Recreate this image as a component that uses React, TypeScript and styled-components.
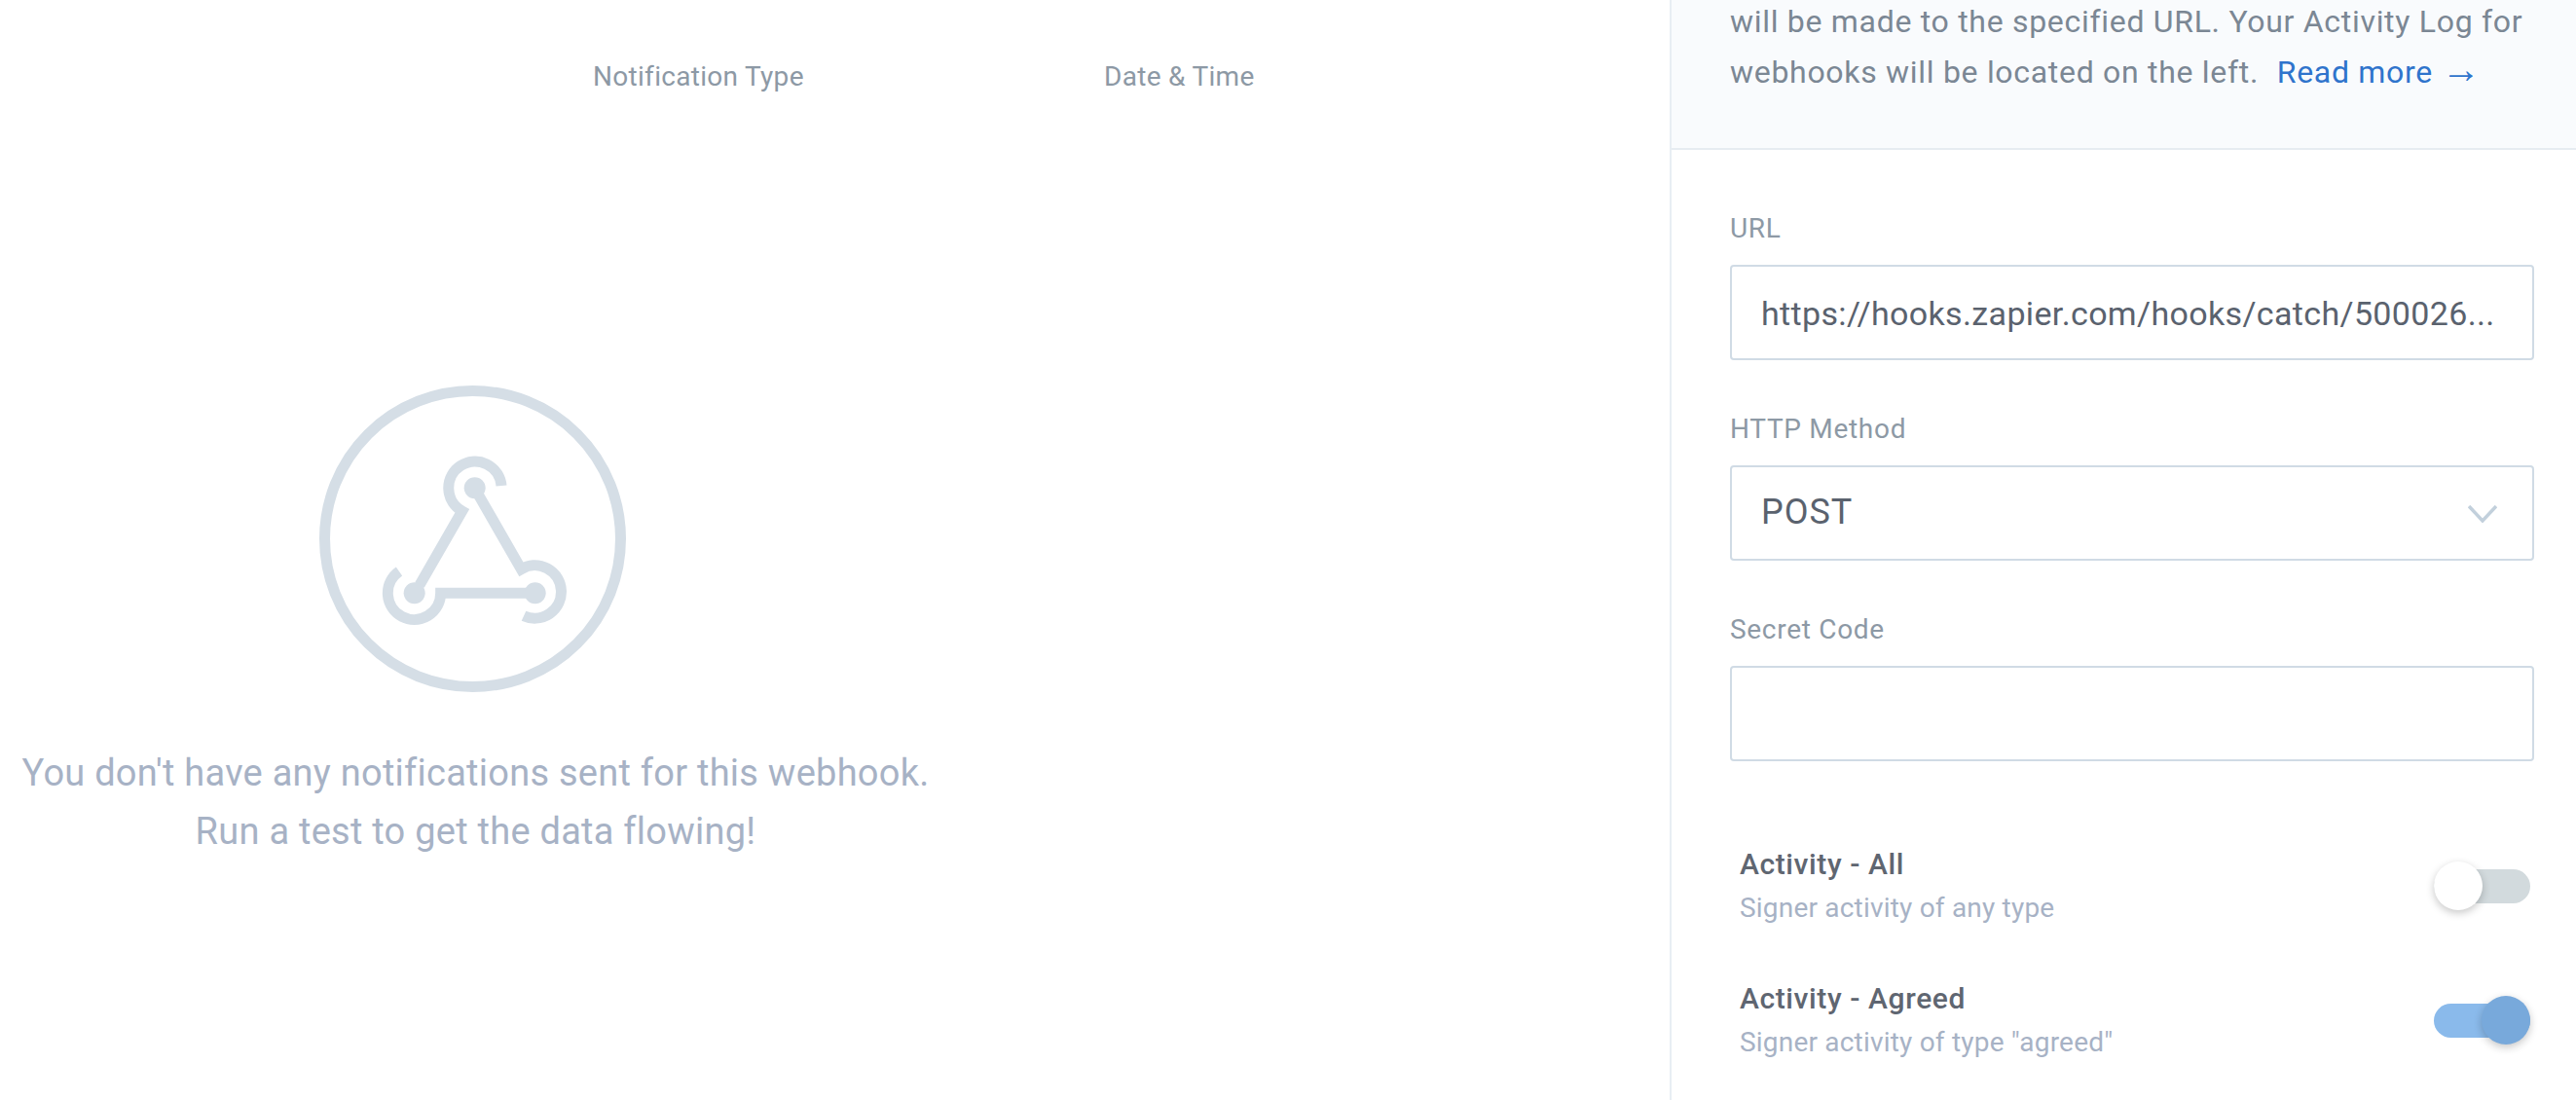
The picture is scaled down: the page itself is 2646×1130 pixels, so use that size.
import React from 'react';
import styled, { createGlobalStyle } from 'styled-components';

const GlobalStyle = createGlobalStyle`
	html, body {
		margin: 0;
		height: 100%;
		overflow: hidden;
		background: #fff;
		font-family: Roboto, "Liberation Sans", sans-serif;
	}
`;

const Page = styled.div`
	display: flex;
	width: 2646px;
	height: 1130px;
	overflow: hidden;
`;

const Main = styled.main`
	flex: 1;
	display: flex;
	flex-direction: column;
`;

const TableHeader = styled.div`
	display: flex;
	padding: 63px 0 0 609px;
	font-size: 28px;
	line-height: 32px;
	letter-spacing: 0.3px;
	color: #8d99a5;
`;

const HeaderCell = styled.div<{ $width: number }>`
	width: ${(p) => p.$width}px;
`;

const EmptyState = styled.div`
	width: 977px;
	margin-top: 301px;
	display: flex;
	flex-direction: column;
	align-items: center;
`;

const EmptyIcon = styled.svg`
	width: 315px;
	height: 315px;
	display: block;
	margin-right: 6px;
`;

const EmptyText = styled.p`
	margin: 53px 0 0;
	font-size: 38px;
	line-height: 60px;
	letter-spacing: 0.25px;
	text-align: center;
	color: #a7b2c5;
	white-space: nowrap;
`;

const Side = styled.aside`
	width: 929px;
	border-left: 2px solid #e8eef3;
	display: flex;
	flex-direction: column;
`;

const Info = styled.div`
	height: 154px;
	box-sizing: border-box;
	border-bottom: 2px solid #e6ecf1;
	background: #f9fbfd;
	padding: 0 20px 0 60px;
	display: flex;
	flex-direction: column;
	justify-content: flex-end;
	overflow: hidden;
`;

const InfoText = styled.p`
	margin: 0 0 52px;
	font-size: 32px;
	line-height: 52px;
	letter-spacing: 0.7px;
	color: #7b8794;
	white-space: nowrap;
`;

const ReadMore = styled.a`
	margin-left: 10px;
	color: #2f74cc;
	text-decoration: none;
`;

const Arrow = styled.span`
	font-family: "Liberation Sans", sans-serif;
	font-size: 40px;
	line-height: 0;
	letter-spacing: 0;
`;

const Form = styled.div`
	padding: 65px 43px 0 60px;
	display: flex;
	flex-direction: column;
`;

const Label = styled.label`
	display: block;
	font-size: 28px;
	line-height: 32px;
	letter-spacing: 0.7px;
	color: #8d99a5;
	margin-bottom: 21px;
`;

const Field = styled.div<{ $large?: boolean }>`
	height: 98px;
	box-sizing: border-box;
	border: 2px solid #d0dbe5;
	border-radius: 4px;
	padding: ${(p) => (p.$large ? '0 30px 2px' : '2px 30px 0')};
	margin-bottom: 55px;
	display: flex;
	align-items: center;
	justify-content: space-between;
	font-size: ${(p) => (p.$large ? '36px' : '34px')};
	letter-spacing: ${(p) => (p.$large ? '1px' : '0.35px')};
	color: #5a626e;
	white-space: nowrap;
`;

const Chevron = styled.svg`
	width: 30px;
	height: 18px;
	margin: 4px 6px 0 0;
`;

const ToggleList = styled.div`
	margin-top: 29px;
	display: flex;
	flex-direction: column;
	gap: 52px;
`;

const ToggleRow = styled.div`
	display: flex;
	align-items: center;
	justify-content: space-between;
	padding: 0 4px 0 10px;
	height: 86px;
`;

const RowTitle = styled.div`
	font-size: 30px;
	line-height: 36px;
	font-weight: 500;
	letter-spacing: 0.6px;
	color: #5f6671;
`;

const RowHint = styled.div`
	margin-top: 11px;
	font-size: 28px;
	line-height: 32px;
	letter-spacing: 0.2px;
	color: #a7b2c5;
`;

const Track = styled.div<{ $on?: boolean }>`
	position: relative;
	width: 99px;
	height: 35px;
	margin-top: 3px;
	border-radius: 18px;
	background: ${(p) => (p.$on ? '#8abaeb' : '#d2dadd')};
`;

const Knob = styled.span<{ $on?: boolean }>`
	position: absolute;
	top: -8px;
	left: ${(p) => (p.$on ? '49px' : '0')};
	width: 50px;
	height: 50px;
	border-radius: 50%;
	background: ${(p) => (p.$on ? '#78a9db' : '#fff')};
	box-shadow: 0 3px 8px rgba(0, 0, 0, 0.22);
`;

const WebhookIcon: React.FC = () => (
	<EmptyIcon viewBox="85 75 945 945" fill="none" stroke="#d5dee6" strokeWidth="33">
		<circle cx="557.5" cy="547.5" r="456" />
		<path d="M646 384A81.5 81.5 0 1 0 525 462L394 690" />
		<path d="M577 415L707 641A81.5 81.5 0 1 1 715 785" />
		<path d="M750 715H459A81.5 81.5 0 1 1 331 648" />
		<circle cx="564" cy="391" r="33" fill="#d5dee6" stroke="none" />
		<circle cx="378" cy="715" r="33" fill="#d5dee6" stroke="none" />
		<circle cx="750" cy="715" r="33" fill="#d5dee6" stroke="none" />
	</EmptyIcon>
);

const App: React.FC = () => {
	return (
		<Page>
			<GlobalStyle />
			<Main>
				<TableHeader>
					<HeaderCell $width={525}>Notification Type</HeaderCell>
					<HeaderCell $width={200}>Date &amp; Time</HeaderCell>
				</TableHeader>
				<EmptyState>
					<WebhookIcon />
					<EmptyText>
						You don't have any notifications sent for this webhook.
						<br />
						Run a test to get the data flowing!
					</EmptyText>
				</EmptyState>
			</Main>
			<Side>
				<Info>
					<InfoText>
						will be made to the specified URL. Your Activity Log for
						<br />
						webhooks will be located on the left. <ReadMore href="#">Read more <Arrow>→</Arrow></ReadMore>
					</InfoText>
				</Info>
				<Form>
					<Label>URL</Label>
					<Field>https://hooks.zapier.com/hooks/catch/500026...</Field>
					<Label>HTTP Method</Label>
					<Field $large>
						POST
						<Chevron viewBox="0 0 30 18" fill="none" stroke="#c2d0dc" strokeWidth="3.5">
							<polyline points="1,1 15,16 29,1" />
						</Chevron>
					</Field>
					<Label>Secret Code</Label>
					<Field />
					<ToggleList>
						<ToggleRow>
							<div>
								<RowTitle>Activity - All</RowTitle>
								<RowHint>Signer activity of any type</RowHint>
							</div>
							<Track>
								<Knob />
							</Track>
						</ToggleRow>
						<ToggleRow>
							<div>
								<RowTitle>Activity - Agreed</RowTitle>
								<RowHint>Signer activity of type "agreed"</RowHint>
							</div>
							<Track $on>
								<Knob $on />
							</Track>
						</ToggleRow>
					</ToggleList>
				</Form>
			</Side>
		</Page>
	);
};

export default App;
